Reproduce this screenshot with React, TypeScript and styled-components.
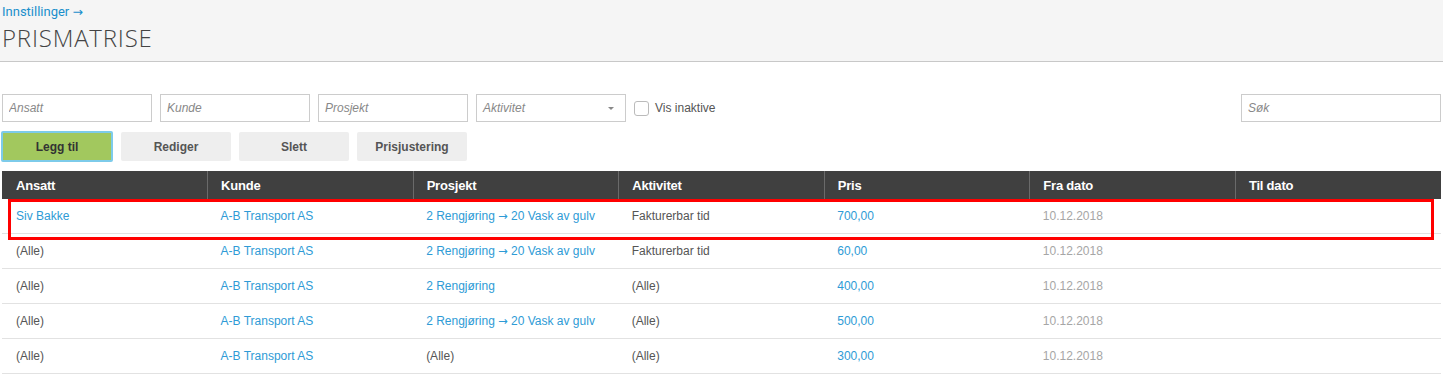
import React from "react";
import styled, { createGlobalStyle } from "styled-components";

const GlobalStyle = createGlobalStyle`
  html, body { margin: 0; padding: 0; background: #fff; }
  body { font-family: "Liberation Sans", Arial, sans-serif; color: #555; }
`;

type Cell = { text: string; kind?: "link" | "muted" | "plain" };

const columns = ["Ansatt", "Kunde", "Prosjekt", "Aktivitet", "Pris", "Fra dato", "Til dato"];

const rows: Cell[][] = [
  [
    { text: "Siv Bakke", kind: "link" },
    { text: "A-B Transport AS", kind: "link" },
    { text: "2 Rengjøring → 20 Vask av gulv", kind: "link" },
    { text: "Fakturerbar tid" },
    { text: "700,00", kind: "link" },
    { text: "10.12.2018", kind: "muted" },
    { text: "" },
  ],
  [
    { text: "(Alle)" },
    { text: "A-B Transport AS", kind: "link" },
    { text: "2 Rengjøring → 20 Vask av gulv", kind: "link" },
    { text: "Fakturerbar tid" },
    { text: "60,00", kind: "link" },
    { text: "10.12.2018", kind: "muted" },
    { text: "" },
  ],
  [
    { text: "(Alle)" },
    { text: "A-B Transport AS", kind: "link" },
    { text: "2 Rengjøring", kind: "link" },
    { text: "(Alle)" },
    { text: "400,00", kind: "link" },
    { text: "10.12.2018", kind: "muted" },
    { text: "" },
  ],
  [
    { text: "(Alle)" },
    { text: "A-B Transport AS", kind: "link" },
    { text: "2 Rengjøring → 20 Vask av gulv", kind: "link" },
    { text: "(Alle)" },
    { text: "500,00", kind: "link" },
    { text: "10.12.2018", kind: "muted" },
    { text: "" },
  ],
  [
    { text: "(Alle)" },
    { text: "A-B Transport AS", kind: "link" },
    { text: "(Alle)" },
    { text: "(Alle)" },
    { text: "300,00", kind: "link" },
    { text: "10.12.2018", kind: "muted" },
    { text: "" },
  ],
];

const Header = styled.header`
  background: #f5f5f5;
  border-bottom: 1px solid #c8c8c8;
  height: 62px;
  padding: 4px 2px 0;
  box-sizing: border-box;
`;

const Crumb = styled.a`
  display: block;
  font-family: Roboto, "Liberation Sans", sans-serif;
  font-size: 13px;
  line-height: 16px;
  color: #1a8fcc;
  text-decoration: none;
`;

const Arrow = styled.span`
  font-family: "DejaVu Sans", sans-serif;
  font-size: 0.95em;
`;

const Title = styled.h1`
  margin: 4px 0 0;
  font-family: "Open Sans", sans-serif;
  font-weight: 300;
  font-size: 24px;
  line-height: 28px;
  letter-spacing: 0.8px;
  color: #444;
`;

const Main = styled.main`
  padding: 32px 2px 0;
`;

const FilterBar = styled.div`
  display: flex;
  align-items: center;
  gap: 8px;
  height: 28px;
`;

const Input = styled.input`
  width: 150px;
  height: 28px;
  box-sizing: border-box;
  border: 1px solid #ccc;
  padding: 0 6px;
  font-family: "Liberation Sans", sans-serif;
  font-size: 12px;
  font-style: italic;
  color: #555;
  outline: none;
  &::placeholder { color: #888; }
`;

const SearchInput = styled(Input)`
  width: 200px;
  margin-left: auto;
`;

const Select = styled.div`
  width: 150px;
  height: 28px;
  box-sizing: border-box;
  border: 1px solid #ccc;
  display: flex;
  align-items: center;
  font-size: 12px;
  font-style: italic;
  color: #888;
  background: #fff;
  span { flex: 1; padding-left: 6px; }
`;

const Caret = styled.div`
  width: 28px;
  height: 100%;
  display: flex;
  align-items: center;
  justify-content: center;
  &::after {
    content: "";
    border-left: 3px solid transparent;
    border-right: 3px solid transparent;
    border-top: 3px solid #888;
  }
`;

const CheckLabel = styled.label`
  display: flex;
  align-items: center;
  gap: 6px;
  font-size: 12px;
  color: #555;
`;

const Box = styled.span`
  width: 13px;
  height: 13px;
  border: 1px solid #bbb;
  border-radius: 3px;
  background: #fff;
`;

const ButtonBar = styled.div`
  display: flex;
  gap: 8px;
  margin-top: 9px;
  margin-left: -1px;
`;

const Button = styled.button<{ $primary?: boolean }>`
  width: ${(p) => (p.$primary ? 112 : 110)}px;
  height: ${(p) => (p.$primary ? 31 : 29)}px;
  margin-top: ${(p) => (p.$primary ? 0 : 1)}px;
  border: ${(p) => (p.$primary ? "2px solid #7dcbea" : "none")};
  border-radius: 2px;
  background: ${(p) => (p.$primary ? "#a2c85e" : "#eeeeee")};
  color: ${(p) => (p.$primary ? "#333" : "#555")};
  font-family: "Liberation Sans", sans-serif;
  font-weight: bold;
  font-size: 12px;
  cursor: pointer;
`;

const TableWrap = styled.div`
  position: relative;
  margin-top: 9px;
`;

const Table = styled.table`
  width: 1439px;
  border-collapse: collapse;
  table-layout: fixed;
`;

const Th = styled.th`
  background: #404040;
  color: #fff;
  text-align: left;
  font-family: "Liberation Sans Narrow", "Liberation Sans", sans-serif;
  font-stretch: condensed;
  font-weight: bold;
  font-size: 13px;
  letter-spacing: -0.2px;
  height: 28px;
  padding: 0 13px;
  border-left: 1px solid #6a6a6a;
  &:first-child { border-left: none; padding-left: 14px; }
`;

const Td = styled.td<{ $kind?: string }>`
  height: 34px;
  padding: 0 13px;
  border-bottom: 1px solid #e2e2e2;
  font-size: 12px;
  white-space: nowrap;
  color: ${(p) => (p.$kind === "link" ? "#2e9bd6" : p.$kind === "muted" ? "#a6a6a6" : "#555")};
  &:first-child { padding-left: 14px; }
`;

const Highlight = styled.div`
  position: absolute;
  left: 6px;
  top: 28px;
  width: 1426px;
  height: 41px;
  box-sizing: border-box;
  border: 3px solid #f00;
  pointer-events: none;
`;

function withArrow(text: string) {
  const parts = text.split("→");
  if (parts.length === 1) return text;
  return (
    <>
      {parts[0]}
      <Arrow>→</Arrow>
      {parts[1]}
    </>
  );
}

export default function App() {
  return (
    <>
      <GlobalStyle />
      <Header>
        <Crumb href="#">
          Innstillinger <Arrow>→</Arrow>
        </Crumb>
        <Title>PRISMATRISE</Title>
      </Header>
      <Main>
        <FilterBar>
          <Input placeholder="Ansatt" />
          <Input placeholder="Kunde" />
          <Input placeholder="Prosjekt" />
          <Select>
            <span>Aktivitet</span>
            <Caret />
          </Select>
          <CheckLabel>
            <Box />
            Vis inaktive
          </CheckLabel>
          <SearchInput placeholder="Søk" />
        </FilterBar>
        <ButtonBar>
          <Button $primary>Legg til</Button>
          <Button>Rediger</Button>
          <Button>Slett</Button>
          <Button>Prisjustering</Button>
        </ButtonBar>
        <TableWrap>
          <Table>
            <thead>
              <tr>
                {columns.map((c) => (
                  <Th key={c}>{c}</Th>
                ))}
              </tr>
            </thead>
            <tbody>
              {rows.map((r, i) => (
                <tr key={i}>
                  {r.map((cell, j) => (
                    <Td key={j} $kind={cell.kind}>
                      {withArrow(cell.text)}
                    </Td>
                  ))}
                </tr>
              ))}
            </tbody>
          </Table>
          <Highlight />
        </TableWrap>
      </Main>
    </>
  );
}
